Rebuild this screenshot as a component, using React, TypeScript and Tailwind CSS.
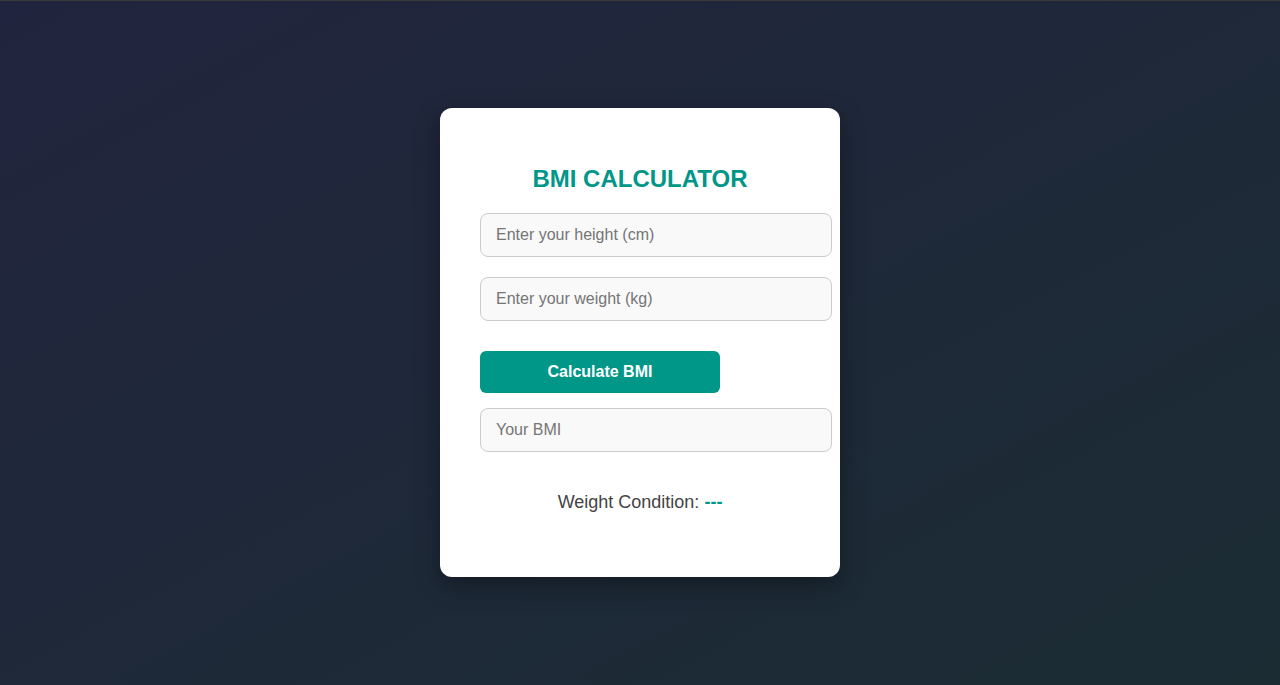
export default function App() {
  return (
    <div
      className="flex h-[685px] w-full items-start justify-center border-t border-[#3a3a3a] bg-gradient-to-br from-[#21243e] to-[#1b2c33]"
      style={{ fontFamily: '"Liberation Sans", Arial, sans-serif' }}
    >
      <div className="mt-[107px] flex h-[469px] w-[400px] flex-col items-center rounded-xl bg-white px-10 pt-[57px] shadow-[0_8px_24px_rgba(0,0,0,0.35)]">
        <h2 className="h-[28px] text-[24px] leading-[28px] font-bold text-[#009688]">
          BMI CALCULATOR
        </h2>
        <div className="mt-[20px] flex w-full flex-col items-start">
          <input
            type="number"
            placeholder="Enter your height (cm)"
            className="box-content h-[42px] w-[320px] shrink-0 rounded-lg border border-[#ccc] bg-[#f9f9f9] px-[15px] text-[16px] text-[#333] outline-none placeholder:text-[#757575]"
          />
          <input
            type="number"
            placeholder="Enter your weight (kg)"
            className="mt-[20px] box-content h-[42px] w-[320px] shrink-0 rounded-lg border border-[#ccc] bg-[#f9f9f9] px-[15px] text-[16px] text-[#333] outline-none placeholder:text-[#757575]"
          />
          <button className="mt-[30px] h-[42px] w-[240px] rounded-md bg-[#009688] text-[16px] font-bold text-white">
            Calculate BMI
          </button>
          <input
            type="text"
            readOnly
            placeholder="Your BMI"
            className="mt-[15px] box-content h-[42px] w-[320px] shrink-0 rounded-lg border border-[#ccc] bg-[#f9f9f9] px-[15px] text-[16px] text-[#333] outline-none placeholder:text-[#757575]"
          />
        </div>
        <p className="mt-[40px] text-[18px] leading-[21px] text-[#444]">
          Weight Condition: <span className="font-bold text-[#009688]">---</span>
        </p>
      </div>
    </div>
  );
}
